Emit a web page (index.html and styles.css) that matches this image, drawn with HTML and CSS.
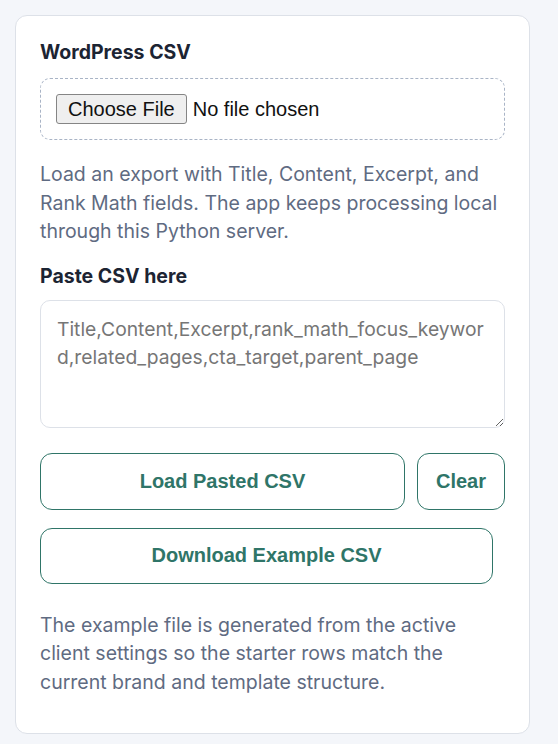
FILE: index.html
```html
<!DOCTYPE html>
<html lang="en">
<head>
<meta charset="utf-8">
<title>WordPress CSV</title>
<link rel="stylesheet" href="styles.css">
</head>
<body>
<section class="card">
  <h3 class="label">WordPress CSV</h3>
  <div class="dropzone">
    <input type="file" class="file-input" accept=".csv">
  </div>
  <p class="hint">Load an export with Title, Content, Excerpt, and Rank Math fields. The app keeps processing local through this Python server.</p>
  <h3 class="label label-paste">Paste CSV here</h3>
  <textarea class="csv-area" placeholder="Title,Content,Excerpt,rank_math_focus_keyword,related_pages,cta_target,parent_page"></textarea>
  <div class="btn-row">
    <button class="btn btn-grow">Load Pasted CSV</button>
    <button class="btn btn-clear">Clear</button>
  </div>
  <button class="btn btn-download">Download Example CSV</button>
  <p class="hint hint-last">The example file is generated from the active client settings so the starter rows match the current brand and template structure.</p>
</section>
</body>
</html>
```

FILE: styles.css
```css
html, body {
  margin: 0;
  padding: 0;
  background: #f4f6fa;
}
body {
  padding: 15px 28px 11px 15px;
  font-family: Inter, "Noto Sans", sans-serif;
}
.card {
  background: #ffffff;
  border: 1px solid #dde1e8;
  border-radius: 12px;
  padding: 22px 24px 36px 24px;
  display: flex;
  flex-direction: column;
}
.label {
  margin: 0;
  font-size: 19.5px;
  font-weight: 700;
  color: #1c2433;
  line-height: 28px;
}
.dropzone {
  margin-top: 12px;
  border: 1px dashed #a9b4c6;
  border-radius: 10px;
  padding: 15px 15px;
  height: 30px;
  display: flex;
  align-items: center;
}
.file-input {
  font-family: "Liberation Sans", Arial, sans-serif;
  font-size: 20px;
  color: #111;
}
.file-input::file-selector-button {
  font-family: "Liberation Sans", Arial, sans-serif;
  font-size: 20px;
  height: 30px;
  padding: 0 11px;
  margin-right: 6px;
  background: #efefef;
  border: 1px solid #858585;
  border-radius: 3px;
  color: #111;
}
.hint {
  margin: 20px 0 0 0;
  font-size: 19.5px;
  line-height: 28.6px;
  color: #5f6b82;
}
.label-paste {
  margin-top: 16px;
}
.csv-area {
  margin-top: 10px;
  height: 128px;
  box-sizing: border-box;
  border: 1px solid #dde1e8;
  border-radius: 10px;
  padding: 14px 16px;
  font-family: Inter, "Noto Sans", sans-serif;
  font-size: 19.3px;
  line-height: 28px;
  color: #333;
  resize: vertical;
  outline: none;
}
.csv-area::placeholder {
  color: #767676;
}
.btn-row {
  margin-top: 25px;
  display: flex;
  gap: 12px;
}
.btn {
  height: 57px;
  box-sizing: border-box;
  background: #ffffff;
  border: 1px solid #2f7568;
  border-radius: 12px;
  color: #2f7568;
  font-family: "Liberation Sans", Arial, sans-serif;
  font-size: 20px;
  font-weight: 700;
  cursor: pointer;
}
.btn-grow {
  flex: 1;
}
.btn-clear {
  width: 88px;
}
.btn-download {
  margin-top: 18px;
  width: 453px;
  height: 56px;
}
.hint-last {
  margin-top: 27px;
}
```
